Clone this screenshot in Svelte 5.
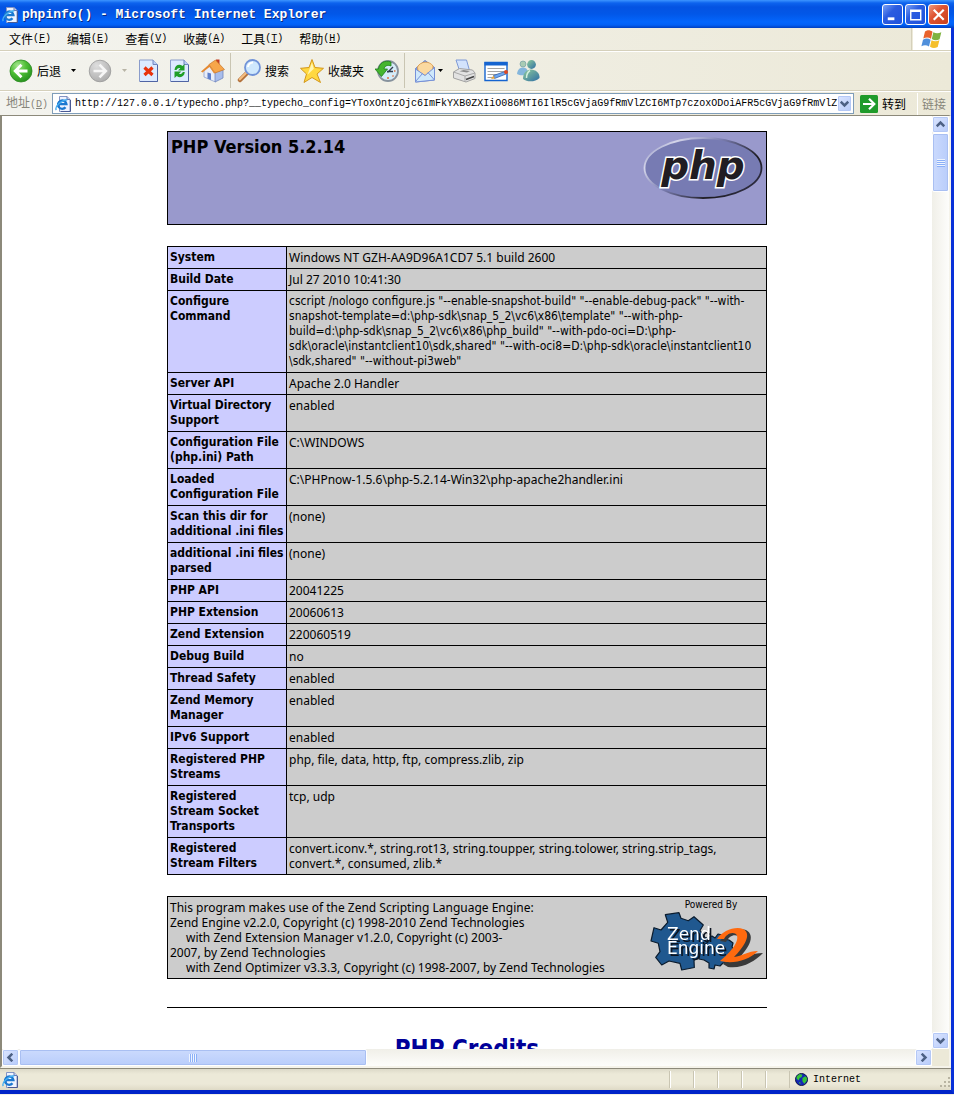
<script>
  const menus = [
    ['文件', 'F'],
    ['编辑', 'E'],
    ['查看', 'V'],
    ['收藏', 'A'],
    ['工具', 'T'],
    ['帮助', 'H'],
  ];

  const rows = [
    [['System'], ['Windows NT GZH-AA9D96A1CD7 5.1 build 2600']],
    [['Build Date'], ['Jul 27 2010 10:41:30']],
    [
      ['Configure', 'Command'],
      [
        'cscript /nologo configure.js "--enable-snapshot-build" "--enable-debug-pack" "--with-',
        'snapshot-template=d:\\php-sdk\\snap_5_2\\vc6\\x86\\template" "--with-php-',
        'build=d:\\php-sdk\\snap_5_2\\vc6\\x86\\php_build" "--with-pdo-oci=D:\\php-',
        'sdk\\oracle\\instantclient10\\sdk,shared" "--with-oci8=D:\\php-sdk\\oracle\\instantclient10',
        '\\sdk,shared" "--without-pi3web"',
      ],
    ],
    [['Server API'], ['Apache 2.0 Handler']],
    [['Virtual Directory', 'Support'], ['enabled']],
    [['Configuration File', '(php.ini) Path'], ['C:\\WINDOWS']],
    [['Loaded', 'Configuration File'], ['C:\\PHPnow-1.5.6\\php-5.2.14-Win32\\php-apache2handler.ini']],
    [['Scan this dir for', 'additional .ini files'], ['(none)']],
    [['additional .ini files', 'parsed'], ['(none)']],
    [['PHP API'], ['20041225']],
    [['PHP Extension'], ['20060613']],
    [['Zend Extension'], ['220060519']],
    [['Debug Build'], ['no']],
    [['Thread Safety'], ['enabled']],
    [['Zend Memory', 'Manager'], ['enabled']],
    [['IPv6 Support'], ['enabled']],
    [['Registered PHP', 'Streams'], ['php, file, data, http, ftp, compress.zlib, zip']],
    [['Registered', 'Stream Socket', 'Transports'], ['tcp, udp']],
    [
      ['Registered', 'Stream Filters'],
      [
        'convert.iconv.*, string.rot13, string.toupper, string.tolower, string.strip_tags,',
        'convert.*, consumed, zlib.*',
      ],
    ],
  ];

  let address = $state(
    'http://127.0.0.1/typecho.php?__typecho_config=YToxOntzOjc6ImFkYXB0ZXIiO086MTI6IlR5cGVjaG9fRmVlZCI6MTp7czoxODoiAFR5cGVjaG9fRmVlZ'
  );
</script>

{#snippet pageIcon()}
  <svg class="i16" viewBox="0 0 16 16" aria-hidden="true">
    <path d="M4.500 .5h7.500l3 3v12h-10.500z" fill="#eef3ff" stroke="#8494c4" />
    <path d="M15.500 4v11.500H6" fill="none" stroke="#4a5a94" />
    <path d="M12 .5v3h3" fill="#c5d0ee" stroke="#6a7ab0" />
    <path d="M10.500 11.300a4.200 4.200 0 1 1 .9-3.200H4" fill="none" stroke="#1b78d0" stroke-width="2.400" />
    <path d="M1.300 14c-2-3 5-10 11-10.300" fill="none" stroke="#46aef0" stroke-width="1.400" />
  </svg>
{/snippet}

{#snippet chevron(turn)}
  <svg class="chev" viewBox="0 0 9 9" aria-hidden="true">
    <path d="M.7 2.700l3.800 3.800 3.800-3.800" transform="rotate({turn} 4.500 4.500)" fill="none" stroke="#4d6185" stroke-width="2.500" />
  </svg>
{/snippet}

{#snippet caret(color)}
  <svg class="caret" viewBox="0 0 7 4" aria-hidden="true"><path d="M1 0h5l-2.500 3z" fill={color} /></svg>
{/snippet}

<div class="desktop">
  <div class="window">
    <header class="title">
      {@render pageIcon()}
      <h1>phpinfo() - Microsoft Internet Explorer</h1>
      <button class="cap" aria-label="Minimize">
        <svg viewBox="0 0 20 20"><path d="M5 14.500h7" stroke="#fff" stroke-width="3" /></svg>
      </button>
      <button class="cap" aria-label="Maximize">
        <svg viewBox="0 0 20 20"><path d="M5 5.500h10.500v10H5zM5 6.500h10" fill="none" stroke="#fff" stroke-width="1.500" /></svg>
      </button>
      <button class="cap close" aria-label="Close">
        <svg viewBox="0 0 20 20"><path d="M5 5l10.500 10.500M15.500 5L5 15.500" stroke="#fff" stroke-width="2.300" /></svg>
      </button>
    </header>

    <div class="menurow">
      <nav>
        {#each menus as [name, key]}
          <button>{name}<span class="key">(<u>{key}</u>)</span></button>
        {/each}
      </nav>
      <div class="brand">
        <svg viewBox="0 0 22 20" aria-hidden="true">
          <path d="M4 2.500c3-2 5-1.500 7.500 .2L10 9.800C7.500 8 5 8 2.300 9.600z" fill="#e8622c" />
          <path d="M12.300 3.200c2.500 1.500 5 1.500 8 .1l-1.700 7c-3 1.500-5 1.300-7.800-.2z" fill="#7fb341" />
          <path d="M2 10.700c3-1.800 5-1.500 7.600 .1L8 17.500C5.500 15.900 3 16 .4 17.200z" fill="#4f8fdb" />
          <path d="M10.500 11.200c2.500 1.500 5 1.500 7.900 .1l-1.700 6.700c-3 1.500-5 1.300-7.700-.2z" fill="#f5bf2b" />
        </svg>
      </div>
    </div>

    <div class="toolbar">
      <div class="group">
        <button>
          <svg class="i24" viewBox="0 0 24 24" aria-hidden="true">
            <defs>
              <radialGradient id="gr" cx=".35" cy=".25" r=".85">
                <stop offset="0" stop-color="#a5e58e" /><stop offset=".45" stop-color="#4fbf36" /><stop offset="1" stop-color="#1f8a1a" />
              </radialGradient>
              <radialGradient id="gy" cx=".35" cy=".25" r=".85">
                <stop offset="0" stop-color="#dedede" /><stop offset="1" stop-color="#a9a9a9" />
              </radialGradient>
            </defs>
            <circle cx="12" cy="12" r="11" fill="url(#gr)" stroke="#2c8a22" stroke-width=".8" />
            <path d="M18.500 12H6.500M12.500 5.700L6.200 12l6.300 6.300" fill="none" stroke="#fff" stroke-width="2.800" />
          </svg>
          <span class="lbl">后退</span>
          <span class="drop">{@render caret('#000')}</span>
        </button>
        <button aria-label="前进">
          <svg class="i24" viewBox="0 0 24 24" aria-hidden="true">
            <circle cx="12" cy="12" r="10.800" fill="url(#gy)" stroke="#999" stroke-width=".8" />
            <path d="M5.500 12h12M11.500 5.700l6.300 6.300-6.300 6.300" fill="none" stroke="#f6f6f6" stroke-width="2.600" />
          </svg>
          <span class="drop">{@render caret('#b8b4a6')}</span>
        </button>
        <button aria-label="停止">
          <svg class="i20" viewBox="0 0 20 24" aria-hidden="true">
            <path d="M.5 1h13.500l4.500 4.500v17H.5z" fill="#dceaff" stroke="#8a9ccb" />
            <path d="M18.500 6v16.500H1" fill="none" stroke="#4f64a4" />
            <path d="M14 1v4.500h4.500" fill="#b9cdf5" stroke="#7286be" />
            <path d="M5.500 8.500l8 7.500M13.500 8.500l-8 7.500" stroke="#e8320c" stroke-width="3.200" />
          </svg>
        </button>
        <button aria-label="刷新">
          <svg class="i20" viewBox="0 0 20 24" aria-hidden="true">
            <path d="M.5 1h13.500l4.500 4.500v17H.5z" fill="#dceaff" stroke="#8a9ccb" />
            <path d="M18.500 6v16.500H1" fill="none" stroke="#4f64a4" />
            <path d="M14 1v4.500h4.500" fill="#b9cdf5" stroke="#7286be" />
            <path d="M4.500 11c.3-5 5-6.500 8-4l2-2v6.500H8l2.300-2.300C9 8.500 7.200 9.200 6.500 11zM14.800 13c-.3 5-5 6.500-8 4l-2.300 2v-6.500h6.800L9 14.800c1.300 .7 3.100 0 3.800-1.800z" fill="#1f9e27" />
          </svg>
        </button>
        <button aria-label="主页">
          <svg class="i24" viewBox="0 0 24 24" aria-hidden="true">
            <path d="M15 .5h3.500v6.500H15z" fill="#c23a1e" />
            <path d="M3 11l6-5 5.500 7v10l-11.500-5z" fill="#e9eefa" stroke="#8da0cf" stroke-width=".8" />
            <path d="M14 13l8-2v8l-8 4z" fill="#a8bdec" stroke="#7186bd" stroke-width=".8" />
            <path d="M6.500 13.500l3.500 1v6.500l-3.500-1.500z" fill="#5f7fca" />
            <path d="M8 5.500l6.500-4.500 9 9.500-9.500 3.500z" fill="#f7a64a" stroke="#c9762a" stroke-width=".7" />
            <path d="M8 5.500l-8 7 1.500 1L8.500 8l4.500 6.500 1.200-.5z" fill="#e58a31" />
          </svg>
        </button>
      </div>

      <div class="group">
        <button>
          <svg class="i24" viewBox="0 0 24 24" aria-hidden="true">
            <path d="M10 14l-7 7" stroke="#b3713b" stroke-width="4.500" stroke-linecap="round" />
            <path d="M9.500 13.500l-6.700 6.800" stroke="#f4bd80" stroke-width="2.200" stroke-linecap="round" />
            <circle cx="15.500" cy="8.500" r="7.500" fill="#cfe8fd" stroke="#7193d8" stroke-width="1.800" />
            <path d="M11 8a5 5 0 0 1 5-4.500" fill="none" stroke="#fff" stroke-width="2" />
          </svg>
          <span class="lbl">搜索</span>
        </button>
        <button>
          <svg class="i24" viewBox="0 0 24 24" aria-hidden="true">
            <path d="M12 .5l3 8 8.500 .8-6.500 5.700 3.500 8.500-8.500-5-8 5 2.500-8.500L.5 9.300 9 8.500z" fill="#ffd840" stroke="#d3971c" stroke-linejoin="round" />
            <path d="M12 3.500l1.800 6.200-6.300 6z" fill="#fff6b5" />
          </svg>
          <span class="lbl">收藏夹</span>
        </button>
        <button aria-label="历史">
          <svg class="i24" viewBox="0 0 24 24" aria-hidden="true">
            <circle cx="13" cy="12" r="10" fill="#d6ecf8" stroke="#87929d" stroke-width="1.800" />
            <path d="M12.500 13.500l5.500-5.500M12 12.500h6" fill="none" stroke="#333f50" stroke-width="1.400" />
            <path d="M20.500 12H19M13 20v-2M18.500 17.500l-1-1" stroke="#e06c3a" stroke-width="1.500" />
            <path d="M16 3C9.500 .5 4 4.500 3.500 10H0l6.500 7.500 6-7.500H9c.5-3 3.500-4.500 7-3z" fill="#45b52f" stroke="#1d7f19" stroke-width=".8" />
          </svg>
        </button>
      </div>

      <div class="group last">
        <button aria-label="邮件">
          <svg class="i24" viewBox="0 0 24 24" aria-hidden="true">
            <path d="M2.500 9.500L12 1.500l9.500 7v12.500l-19 2z" fill="#7f9fe4" stroke="#6a83ca" />
            <path d="M4.500 8c3-6 12-6.500 15.500-1l-.5 5-7.500 4.500L5 12z" fill="#fbd9a0" stroke="#e59b3c" stroke-width=".8" />
            <path d="M2.500 10L12 16.500l9.500-8v12.500l-19 2z" fill="#cfe8fb" stroke="#7691d8" />
            <path d="M2.500 22.500l7-8M21.500 21l-6.500-7.500" stroke="#7691d8" />
          </svg>
          {@render caret('#000')}
        </button>
        <button aria-label="打印">
          <svg class="i24" viewBox="0 0 24 24" aria-hidden="true">
            <path d="M4 1h10.500l3 10.500h-10z" fill="#d3e3fc" stroke="#7f9ad6" />
            <path d="M1.500 13l6-3.500 13 1.500 2.500 3v5.500l-9 3.500-12.500-4z" fill="#e2e2e2" stroke="#a2a2a2" />
            <path d="M1.500 13l11.500 4 10-3M13 17v6" fill="none" stroke="#a8a8a8" />
            <path d="M7.500 12.200l4-1.200 6.500 1-3 1.500z" fill="#8a8a8a" />
            <path d="M14 20.500l8-3" stroke="#444" stroke-width="1.800" />
          </svg>
        </button>
        <button aria-label="编辑">
          <svg class="i24" viewBox="0 0 24 24" aria-hidden="true">
            <path d="M1 3.500h22v18H1z" fill="#fff" stroke="#1564d0" stroke-width="1.400" />
            <path d="M.5 3h23v3.500H.5z" fill="#1564d0" />
            <path d="M3.500 9.500h17M3.500 12.500h17M3.500 15.500h10M3.500 18.500h6" stroke="#a4a4a4" />
            <path d="M9.500 16.500l11.500-4 1 2.500-11.500 4.500z" fill="#6fa8f0" stroke="#345fa8" stroke-width=".8" />
            <path d="M7 20l2.500-3.500 1.500 3z" fill="#e9a53c" />
            <circle cx="22" cy="13" r="2" fill="#dd4a22" />
          </svg>
        </button>
        <button aria-label="Messenger">
          <svg class="i24" viewBox="0 0 24 24" aria-hidden="true">
            <defs>
              <linearGradient id="bd" x1="0" x2="1" y1="0" y2="1">
                <stop offset="0" stop-color="#8ecb9a" /><stop offset="1" stop-color="#2f6fa5" />
              </linearGradient>
            </defs>
            <circle cx="7" cy="5" r="3" fill="#a9cbb4" stroke="#6b97a0" stroke-width=".6" />
            <path d="M1 15c.5-4.500 3-6.500 6-6.500s5 2 5 6.500c-3 1.500-8 2-11 0z" fill="#84b6dc" />
            <circle cx="15.500" cy="5.500" r="4.400" fill="url(#bd)" />
            <path d="M7 20c0-6 3.500-9.500 8-9.500s9 3.500 8.500 8.500c-4 4-12 4.500-16.500 1z" fill="url(#bd)" />
            <path d="M10.500 19c0-4 1-6 3.500-7.500" fill="none" stroke="#d5f0dc" stroke-width="1.500" />
          </svg>
        </button>
      </div>
    </div>

    <div class="addressbar">
      <label for="url">地址<span class="key">(<u>D</u>)</span></label>
      <div class="combo">
        {@render pageIcon()}
        <input id="url" type="text" bind:value={address} spellcheck="false" />
        <button class="sb" aria-label="地址列表">{@render chevron(0)}</button>
      </div>
      <button class="go">
        <svg viewBox="0 0 18 18" aria-hidden="true">
          <rect width="18" height="18" rx="1.500" fill="#1f9b2b" />
          <path d="M3 9h11M9 3.800L14.300 9 9 14.200" fill="none" stroke="#fff" stroke-width="2.200" />
        </svg>
        转到
      </button>
      <button class="links">链接</button>
    </div>

    <div class="view">
      <main>
        <section class="banner">
          <h2>PHP Version 5.2.14</h2>
          <svg class="php" viewBox="0 0 120 64" role="img" aria-label="PHP logo">
            <defs>
              <linearGradient id="rim" x1="0" y1="0" x2="1" y2=".6">
                <stop offset="0" stop-color="#6f74ae" /><stop offset=".22" stop-color="#d5d6ea" /><stop offset=".5" stop-color="#7a7db0" /><stop offset=".85" stop-color="#1c1a20" /><stop offset="1" stop-color="#2b2a3c" />
              </linearGradient>
            </defs>
            <ellipse cx="60" cy="32" rx="58.500" ry="30" fill="#777bb3" stroke="url(#rim)" stroke-width="1.800" />
            <text x="60" y="43" text-anchor="middle" class="phptext">php</text>
          </svg>
        </section>

        <table>
          <tbody>
            {#each rows as [name, value]}
              <tr>
                <th scope="row">{#each name as line, i}{#if i}<br />{/if}{line}{/each}</th>
                <td class:dense={value.length > 2}>{#each value as line, i}{#if i}<br />{/if}{line}{/each}</td>
              </tr>
            {/each}
          </tbody>
        </table>

        <section class="zend">
          <p>
            This program makes use of the Zend Scripting Language Engine:<br />
            Zend Engine v2.2.0, Copyright (c) 1998-2010 Zend Technologies<br />
            <span class="indent">with Zend Extension Manager v1.2.0, Copyright (c) 2003-</span><br />
            2007, by Zend Technologies<br />
            <span class="indent">with Zend Optimizer v3.3.3, Copyright (c) 1998-2007, by Zend Technologies</span>
          </p>
          <svg class="engine" viewBox="0 0 116 75" role="img" aria-label="Powered By Zend Engine 2">
            <text x="63" y="8" text-anchor="middle" class="pw">Powered By</text>
            <g stroke="#0b1c2e" stroke-width="1.200" fill="#20588f" stroke-linejoin="round">
              <path d="M17.300 14.700L31 12.700l2 5.600 7.300 2.400 5.700-4L55.300 25l-3.300 5.500 5 7 5 1-2 12-8 6-6 4 .3 7L33.700 70 32 63.300 21 61l-7.300 4-6-7.700L12 51.700l-1.700-8.400L3 41l3-13.300 7 2.300 6.700-7.700z" />
              <path d="M56 45l4-3-1-4 5-2 3 2 3-4 4 1 2 4 5 1 4 3-1 4 3 4-2 5-4 1-1 5-5 1-3 3-5-1-1 4-5-1v-5l-5-3-5-1 1-5 4-3z" />
            </g>
            <path d="M72 41c6-8 18-14 26-11 11 6 1 20-8 29 8-1 13-6 25-6-8 8-20 16-35 14l-5-3c11-9 20-23 15-28-5-2-9 1-12 6z" fill="#3a3a3a" />
            <path d="M69 39c5-8 18-13 26-10 10 5 0 19-9 28 8-1 14-6 24-6-8 8-20 12-32 11l-6-1c11-9 21-21 16-27-5-3-10 1-12 5z" fill="#ff6a0f" />
            <g class="ze"><text x="19" y="40">Zend</text><text x="19" y="54">Engine</text></g>
          </svg>
        </section>

        <hr />
        <h2 class="credits">PHP Credits</h2>
      </main>

      <div class="vbar">
        <button class="sb" aria-label="Scroll up">{@render chevron(180)}</button>
        <div class="thumb vthumb"></div>
        <button class="sb end" aria-label="Scroll down">{@render chevron(0)}</button>
      </div>
      <div class="hbar">
        <button class="sb" aria-label="Scroll left">{@render chevron(90)}</button>
        <div class="thumb hthumb"></div>
        <button class="sb end" aria-label="Scroll right">{@render chevron(-90)}</button>
      </div>
    </div>

    <footer>
      {@render pageIcon()}
      <div class="panes"><i></i><i></i><i></i><i></i><i></i></div>
      <div class="zone">
        <svg viewBox="0 0 14 14" aria-hidden="true">
          <circle cx="7" cy="7" r="6.500" fill="#1426b8" stroke="#0a1040" />
          <path d="M2 3.500L5 1l3 1-1 2.500-2 1L4 8 1.500 6zM8 5.500l3-2 2 2-.5 3-2.500 3L8 9zM4 9.500l2 1-.5 2z" fill="#35c435" />
        </svg>
        <span>Internet</span>
        <svg class="grip" viewBox="0 0 12 12" aria-hidden="true">
          <path d="M9 1h2v2H9zM5 5h2v2H5zM9 5h2v2H9zM1 9h2v2H1zM5 9h2v2H5zM9 9h2v2H9z" fill="#b8b4a2" />
        </svg>
      </div>
    </footer>
  </div>
</div>

<style>
  :global(body) {
    margin: 0;
  }
  .desktop {
    height: 100vh;
    box-sizing: border-box;
    padding-bottom: 1px;
    background: #f1efe6;
    font: 12px/15px 'DejaVu Sans Condensed', 'DejaVu Sans', 'Noto Sans CJK SC', sans-serif;
    color: #000;
  }
  .window {
    height: 100%;
    box-sizing: border-box;
    display: flex;
    flex-direction: column;
    border-right: 3px solid #0831d9;
    border-bottom: 4px solid #0024c8;
    background: #ece9d8;
  }
  button {
    border: 0;
    padding: 0;
    margin: 0;
    background: none;
    color: inherit;
    font: 12px/16px 'Noto Sans CJK SC', sans-serif;
    display: flex;
    align-items: center;
    white-space: nowrap;
  }
  svg {
    display: block;
    flex: none;
  }
  .i16 {
    width: 16px;
    height: 16px;
  }
  .i20 {
    width: 20px;
    height: 24px;
  }
  .i24 {
    width: 24px;
    height: 24px;
  }
  .caret {
    width: 7px;
    height: 4px;
  }
  .chev {
    width: 9px;
    height: 9px;
  }
  .key {
    font: 10px/16px 'Liberation Mono', monospace;
  }

  .title {
    height: 28px;
    margin-right: -3px;
    flex: none;
    box-sizing: border-box;
    display: flex;
    align-items: center;
    gap: 2px;
    padding: 1px 5px 0 2px;
    background: linear-gradient(#3d95ff 0, #0d63ee 3px, #0453e2 7px, #0257e8 14px, #0366fd 22px, #0260f5 25px, #003fc0 28px);
  }
  .title h1 {
    flex: 1;
    margin: 0 0 0 2px;
    font: bold 13px/20px 'Liberation Mono', monospace;
    color: #fff;
    text-shadow: 1px 1px #0a2a80;
    white-space: nowrap;
  }
  .cap {
    width: 21px;
    height: 21px;
    box-sizing: border-box;
    border: 1px solid #fff;
    border-radius: 3px;
    background: linear-gradient(135deg, #7ba2f5, #2b5ce0 40%, #1f52dc);
  }
  .cap svg {
    width: 19px;
    height: 19px;
  }
  .close {
    background: linear-gradient(135deg, #ee9a80, #df5433 40%, #c8401c);
  }

  .menurow {
    height: 22px;
    flex: none;
    display: flex;
    border-bottom: 1px solid #d5d0bb;
    background: linear-gradient(90deg, #f3f3ee, #ece9d8);
  }
  .menurow nav {
    flex: 1;
    display: flex;
    gap: 16px;
    padding-left: 9px;
    border-right: 1px solid #d5d0bb;
  }
  .brand {
    width: 38px;
    margin-left: 1px;
    display: flex;
    align-items: center;
    justify-content: center;
    background: #fff;
  }
  .brand svg {
    width: 22px;
    height: 20px;
  }

  .toolbar {
    height: 38px;
    flex: none;
    display: flex;
    align-items: stretch;
    padding-left: 9px;
    border-top: 1px solid #fff;
    border-bottom: 1px solid #d5d0bb;
    background: linear-gradient(90deg, #f3f3ee, #ece9d8);
  }
  .group {
    display: flex;
    gap: 11px;
    padding-right: 5px;
    margin: 1px 0 2px;
  }
  .group + .group {
    padding-left: 6px;
    border-left: 1px solid #c9c5b2;
  }
  .group.last {
    gap: 8px;
    padding-left: 8px;
  }
  .lbl {
    margin-left: 4px;
  }
  .drop {
    margin-left: 9px;
  }

  .addressbar {
    height: 23px;
    flex: none;
    display: flex;
    align-items: center;
    padding-left: 6px;
    border-top: 1px solid #fff;
    background: linear-gradient(90deg, #f3f3ee, #ece9d8);
  }
  .addressbar label {
    font: 12px/16px 'Noto Sans CJK SC', sans-serif;
    color: #87857a;
    margin-right: 4px;
    white-space: nowrap;
  }
  .combo {
    flex: 1;
    min-width: 0;
    height: 21px;
    box-sizing: border-box;
    display: flex;
    align-items: center;
    gap: 4px;
    padding: 1px 1px 1px 2px;
    border: 1px solid #7f9db9;
    background: #fff;
  }
  .combo input {
    flex: 1;
    min-width: 0;
    border: 0;
    padding: 0;
    outline: 0;
    background: none;
    font: 10px/16px 'Liberation Mono', monospace;
    color: #000;
  }
  .combo .sb {
    width: 15px;
    height: 17px;
    margin-left: -4px;
  }
  .go {
    gap: 4px;
    margin-left: 6px;
  }
  .go svg {
    width: 18px;
    height: 18px;
  }
  .links {
    height: 22px;
    margin-left: 11px;
    padding: 0 5px 0 4px;
    border-left: 1px solid #fff;
    color: #87857a;
  }

  .view {
    flex: 1;
    min-height: 0;
    display: grid;
    grid-template: minmax(0, 1fr) 17px / minmax(0, 1fr) 17px;
    border: 2px solid #f5f3ea;
    border-top: 1px solid #8c897a;
    border-left: 2px solid #8c897a;
  }
  main {
    overflow: hidden;
    background: #fff;
    padding-top: 15px;
  }
  main > * {
    width: 600px;
    box-sizing: border-box;
    margin: 0 auto 21px;
  }
  .banner {
    height: 94px;
    display: flex;
    justify-content: space-between;
    padding: 3px;
    border: 1px solid #000;
    background: #9999cc;
  }
  .banner h2 {
    margin: 0;
    font-size: 18px;
    line-height: 24px;
  }
  .php {
    width: 120px;
    height: 64px;
    margin-top: 1px;
    overflow: visible;
  }
  .phptext {
    font: italic bold 39px 'DejaVu Sans', sans-serif;
    fill: #211d22;
    stroke: #fff;
    stroke-width: 3px;
    paint-order: stroke;
  }
  table {
    border-collapse: collapse;
    table-layout: fixed;
  }
  th,
  td {
    border: 1px solid #000;
    padding: 3px 2px;
    text-align: left;
    vertical-align: top;
    white-space: nowrap;
  }
  th {
    width: 114px;
    background: #ccccff;
  }
  td,
  .zend p {
    font-family: 'Noto Sans', sans-serif;
  }
  td {
    background: #cccccc;
  }
  .dense {
    font-family: 'DejaVu Sans Condensed', 'DejaVu Sans', sans-serif;
  }
  .zend {
    display: flex;
    justify-content: space-between;
    padding: 3px 2px;
    border: 1px solid #000;
    background: #cccccc;
    margin-bottom: 28px;
  }
  .zend p {
    margin: 0;
    white-space: nowrap;
  }
  .indent {
    margin-left: 16px;
  }
  .engine {
    width: 116px;
    height: 75px;
    overflow: visible;
  }
  .pw {
    font-size: 10px;
  }
  .ze {
    font: 17px 'DejaVu Sans', sans-serif;
    fill: #fff;
    filter: drop-shadow(2px 2px 0 #0c1420);
  }
  hr {
    height: 1px;
    border: 0;
    background: #000;
    margin-bottom: 26px;
  }
  .credits {
    font-size: 24px;
    line-height: 30px;
    text-align: center;
    color: #000099;
  }

  .sb {
    flex: none;
    width: 17px;
    height: 17px;
    box-sizing: border-box;
    justify-content: center;
    border: 1px solid #fff;
    border-radius: 2px;
    box-shadow: inset 0 0 0 1px #b4c8f6;
    background: linear-gradient(135deg, #dbe5ff, #b7cbfa);
  }
  .vbar {
    display: flex;
    flex-direction: column;
    background: linear-gradient(90deg, #f0efe8, #fdfdfb);
  }
  .hbar {
    display: flex;
    background: linear-gradient(#f0efe8, #fdfdfb);
  }
  .end {
    margin-top: auto;
    margin-left: auto;
  }
  .thumb {
    box-sizing: border-box;
    border: 1px solid #fff;
    border-radius: 2px;
    box-shadow: inset 0 0 0 1px #a9bff2;
    display: flex;
  }
  .thumb::after {
    content: '';
    margin: auto;
    width: 8px;
    height: 8px;
  }
  .vthumb {
    height: 59px;
    background: linear-gradient(90deg, #cbdafd, #b9cdfb);
  }
  .vthumb::after {
    background: repeating-linear-gradient(#eef4fe 0 1px, #8cb0f8 1px 2px);
  }
  .hthumb {
    width: 348px;
    background: linear-gradient(#cbdafd, #b9cdfb);
  }
  .hthumb::after {
    background: repeating-linear-gradient(90deg, #eef4fe 0 1px, #8cb0f8 1px 2px);
  }

  footer {
    height: 22px;
    flex: none;
    box-sizing: border-box;
    display: flex;
    align-items: center;
    padding-left: 2px;
    border-top: 1px solid #8c897a;
    background: linear-gradient(#dcd9c8, #ece9d8 5px, #ece9d8 15px, #dedac6);
  }
  .panes {
    margin-left: auto;
    display: flex;
  }
  .panes i {
    width: 24px;
    height: 17px;
    box-sizing: border-box;
    border-left: 1px solid #c9c5b2;
    box-shadow: inset 1px 0 #fff;
  }
  .zone {
    width: 162px;
    height: 17px;
    box-sizing: border-box;
    display: flex;
    align-items: center;
    gap: 5px;
    padding-left: 5px;
    border-left: 1px solid #c9c5b2;
    font: 10px/16px 'Liberation Mono', monospace;
  }
  .zone svg {
    width: 13px;
    height: 13px;
  }
  .zone .grip {
    width: 12px;
    height: 12px;
    margin-left: auto;
    align-self: flex-end;
  }
</style>
